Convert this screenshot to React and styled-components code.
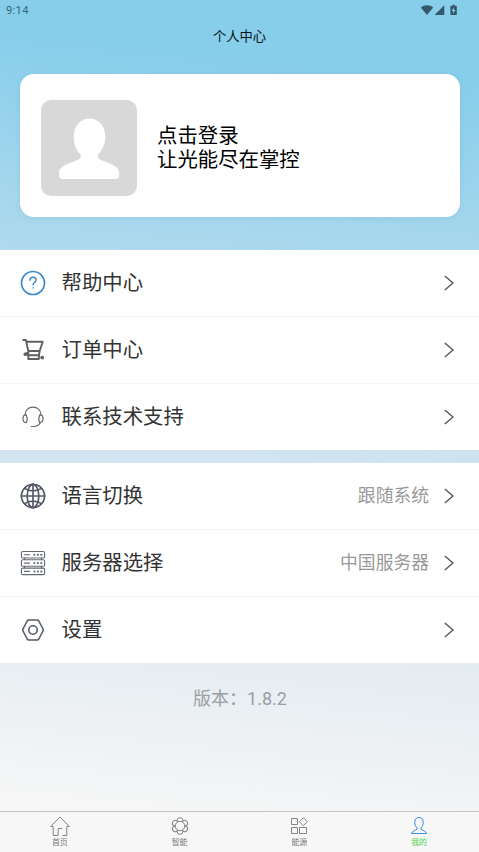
import React from 'react'
import styled, { createGlobalStyle } from 'styled-components'

const GlobalStyle = createGlobalStyle`
    html, body {
        margin: 0;
        padding: 0;
    }
    body {
        font-family: Roboto, 'Noto Sans CJK SC', sans-serif;
    }
`

const Page = styled.div`
    display: flex;
    flex-direction: column;
    box-sizing: border-box;
    width: 100%;
    height: 852px;
    overflow: hidden;
    background: linear-gradient(186deg, #87ceeb 0%, #87ceeb 9%, #d1e4f0 53%, #e8eef2 79%, #f7f7f7 95%);
`

const StatusBar = styled.div`
    display: flex;
    justify-content: space-between;
    align-items: center;
    height: 20px;
    padding: 0 21px 0 6px;
    color: #35687c;
    font-size: 11.2px;
    letter-spacing: 0.3px;
`

const StatusIcons = styled.svg`
    display: block;
    width: 38px;
    height: 12px;
    margin-top: -1px;
`

const Title = styled.h1`
    height: 54px;
    margin: 0;
    color: #0a1419;
    font-size: 13.3px;
    font-weight: 400;
    line-height: 33px;
    text-align: center;
`

const LoginCard = styled.div`
    display: flex;
    align-items: center;
    box-sizing: border-box;
    flex: none;
    height: 143px;
    margin: 0 19px 33px 20px;
    padding: 4px 21px 0;
    border-radius: 14px;
    background: #fff;
    box-shadow: 0 1px 6px rgba(60, 120, 150, 0.12);
`

const Avatar = styled.svg`
    display: block;
    width: 96px;
    height: 96px;
    margin-right: 20px;
    border-radius: 10px;
    background: #d8d8d8;
`

const LoginText = styled.div`
    color: #000;
    font-size: 20.4px;
    line-height: 24px;
`

const Menu = styled.ul`
    flex: none;
    margin: 0 0 13px;
    padding: 0;
    list-style: none;
    background: #fff;
`

const MenuRow = styled.li`
    display: flex;
    align-items: center;
    box-sizing: border-box;
    height: 67px;
    padding: 0 25px 0 20px;
    border-bottom: 1px solid #f5f5f5;

    &:last-child {
        height: 66px;
        border-bottom: none;
    }
`

const MenuIcon = styled.svg`
    display: block;
    width: 26px;
    height: 26px;
    margin-right: 15.5px;
    fill: none;
    stroke: ${props => props.$color || '#555b66'};
    stroke-width: ${props => props.$weight || 1.5};
    stroke-linecap: round;
    stroke-linejoin: round;
`

const Label = styled.span`
    flex: 1;
    color: #333;
    font-size: 20.4px;
    line-height: 30px;
`

const Value = styled.span`
    margin-right: 15px;
    color: #999;
    font-size: 17.8px;
    line-height: 26px;
`

const Chevron = styled.svg`
    display: block;
    width: 10px;
    height: 16px;
    fill: none;
    stroke: #555;
    stroke-width: 1.4;
`

const Version = styled.p`
    flex: 1;
    margin: 9px 0 0;
    padding-left: 1px;
    color: #999fa2;
    font-size: 18px;
    line-height: 28px;
    text-align: center;
`

const TabBar = styled.nav`
    display: flex;
    box-sizing: border-box;
    flex: none;
    height: 41px;
    border-top: 1px solid #c2c4c3;
    background: #f7f7f7;
`

const Tab = styled.div`
    display: flex;
    flex: 1;
    flex-direction: column;
    align-items: center;
    padding-top: 4px;
    color: ${props => props.$active ? '#4cd54c' : '#777'};
    font-size: 8px;
    line-height: 13px;
`

const TabIcon = styled.svg`
    display: block;
    width: 20px;
    height: 20px;
    fill: none;
    stroke: ${props => props.$active ? '#3c8ce0' : '#858585'};
    stroke-width: 1;
`

const HelpIcon = () => (
    <MenuIcon viewBox='0 0 26 26' $color='#3d8acb' $weight={1.7}>
        <circle cx='13' cy='13' r='11.5'/>
        <path strokeWidth='1.4' d='M10 10.3c0-1.9 1.3-3 3-3s3.1 1 3.1 2.7c0 2.2-3 2.6-3 5M13.1 17.8v.3'/>
    </MenuIcon>
)

const CartIcon = () => (
    <MenuIcon viewBox='0 0 26 26' $color='#606060' $weight={1.9}>
        <path d='M3.2 3h2.7l2.5 11.700M6.300 4.700h16.400l-3 9.300H8.300M8.300 14.300v3.900h10.500l.8-3.500M8.300 18.200V22h10.500l.3-3.500M8.300 15.300 5 17l3.300 1.200'/>
        <circle cx='22.2' cy='20.6' r='1' fill='#606060'/>
        <circle cx='5.2' cy='17.2' r='.8' fill='#606060'/>
    </MenuIcon>
)

const SupportIcon = () => (
    <MenuIcon viewBox='0 0 26 26' $weight={1.2} $color='#686868'>
        <path d='M5 10.600C5.200 6 8.600 3.100 13 3.100s7.800 2.900 8 7.500'/>
        <path d='M6.300 10.800c-2.300-.2-3.300 1.400-3.300 3.900s1.200 4.200 3.500 3.900c.9-2.400.8-5.400-.2-7.800zM19.700 10.800c2.300-.2 3.300 1.400 3.300 3.900s-1.200 4.200-3.500 3.900c-.9-2.400-.8-5.400.2-7.800z'/>
        <path d='M20.300 18.700c-1.300 2.500-4 3.800-7 3.800h-2'/>
    </MenuIcon>
)

const GlobeIcon = () => (
    <MenuIcon viewBox='0 0 26 26' $weight={1.7}>
        <circle cx='13' cy='13' r='11.6'/>
        <ellipse cx='13' cy='13' rx='5.8' ry='11.6'/>
        <path d='M13 1.400v23.200M1.400 13h23.200M4.600 5.400c4.800 3.200 12 3.200 16.800 0M4.600 20.600c4.800-3.200 12-3.200 16.800 0'/>
    </MenuIcon>
)

const ServerIcon = () => (
    <MenuIcon viewBox='0 0 26 26' $weight={1.1} $color='#646975'>
        {[1.5, 9.8, 18.1].map(y => (
            <g key={y}>
                <rect x='1.4' y={y} width='23.2' height='6.5' rx='1.4'/>
                <path d={`M4.5 ${y + 3.3}h5`}/>
                <path d={`M14.3 ${y + 3.3}h.2M17.8 ${y + 3.3}h.2M21.2 ${y + 3.3}h.2`} strokeWidth='2'/>
            </g>
        ))}
        <path d='M4.5 8v1.6M21.5 8v1.6M4.5 16.3v1.6M21.5 16.3v1.6'/>
    </MenuIcon>
)

const SettingsIcon = () => (
    <MenuIcon viewBox='0 0 26 26' $weight={1.6}>
        <path d='M8.900 3h8.200c.8 0 1.300.3 1.700 1l4.200 8c.4.700.4 1.300 0 2l-4.200 8c-.4.700-.9 1-1.700 1H8.900c-.8 0-1.300-.3-1.700-1L3 14c-.4-.7-.4-1.300 0-2l4.200-8c.4-.7.900-1 1.700-1z'/>
        <circle cx='13' cy='13' r='4.2'/>
    </MenuIcon>
)

const Item = ({ icon, title, value }) => (
    <MenuRow>
        {icon}
        <Label>{title}</Label>
        {value && <Value>{value}</Value>}
        <Chevron viewBox='0 0 10 16'><path d='M.8 1 9 8 .8 15'/></Chevron>
    </MenuRow>
)

export default function App() {
    return (
        <Page>
            <GlobalStyle/>
            <StatusBar>
                <span>9:14</span>
                <StatusIcons viewBox='0 0 38 12' fill='#35586b'>
                    <path d='M.8 3.6C4.3.5 9.7.5 13.2 3.6L7 11z'/>
                    <path d='M24.3 1.3V11h-9.7z'/>
                    <path fillRule='evenodd' d='M31 1.8h1.5V.8h2.2v1h1.5q.6 0 .6.6v8q0 .6-.6.6H31q-.6 0-.6-.6v-8q0-.6.6-.6zM34 3.5 31.7 7h1.5v2.6L35.5 6H34z'/>
                </StatusIcons>
            </StatusBar>
            <Title>个人中心</Title>
            <LoginCard>
                <Avatar viewBox='0 0 96 96'>
                    <path fill='#fff' d='M48.500 18.500c9.500 0 15.800 8 15.800 18 0 7.500-2.800 13.200-6.800 17.500-1.400 2-.9 4 1 5.200C64 62 78.200 65.600 78.200 72v3.500c0 2.300-1.400 3.500-3.500 3.500H21.800c-2.400 0-3.800-1.200-3.800-3.500V72c0-6.400 14.500-10 20-12.800 2-1.200 2.500-3.200 1-5.200-4-4.300-6.300-10-6.300-17.500 0-10 6.300-18 15.800-18z'/>
                </Avatar>
                <LoginText>
                    <div>点击登录</div>
                    <div>让光能尽在掌控</div>
                </LoginText>
            </LoginCard>
            <Menu>
                <Item icon={<HelpIcon/>} title='帮助中心'/>
                <Item icon={<CartIcon/>} title='订单中心'/>
                <Item icon={<SupportIcon/>} title='联系技术支持'/>
            </Menu>
            <Menu>
                <Item icon={<GlobeIcon/>} title='语言切换' value='跟随系统'/>
                <Item icon={<ServerIcon/>} title='服务器选择' value='中国服务器'/>
                <Item icon={<SettingsIcon/>} title='设置'/>
            </Menu>
            <Version>版本：1.8.2</Version>
            <TabBar>
                <Tab>
                    <TabIcon viewBox='0 0 20 20'>
                        <path d='M12.5 19.5h4.300v-9h2.500L10 1 .7 10.500h2.500v9h5v-7h4'/>
                    </TabIcon>
                    首页
                </Tab>
                <Tab>
                    <TabIcon viewBox='0 0 20 20'>
                        {[0, 60, 120, 180, 240, 300].map(deg => (
                            <circle key={deg} cx='10' cy='4.6' r='2.9' transform={`rotate(${deg} 10 10)`}/>
                        ))}
                        <circle cx='10' cy='10' r='4.7' fill='#f7f7f7'/>
                    </TabIcon>
                    智能
                </Tab>
                <Tab>
                    <TabIcon viewBox='0 0 20 20'>
                        <path d='M2.500 2.500h6v6h-6zM2.500 11.500h6v6h-6zM10.500 11.500h7v6h-7zM14.300 1.700l4 4-4 4-4-4z'/>
                    </TabIcon>
                    能源
                </Tab>
                <Tab $active>
                    <TabIcon viewBox='0 0 20 20' $active>
                        <path d='M8 11.800C6.300 10.500 5.800 8.500 5.800 6c0-3 1.700-4.500 4.200-4.500S14.200 3 14.200 6c0 2.500-.5 4.500-2.200 5.800v1.400c1.500 1.300 5 1.800 5.500 4.300H2.500c.5-2.500 4-3 5.500-4.300z'/>
                    </TabIcon>
                    我的
                </Tab>
            </TabBar>
        </Page>
    )
}
